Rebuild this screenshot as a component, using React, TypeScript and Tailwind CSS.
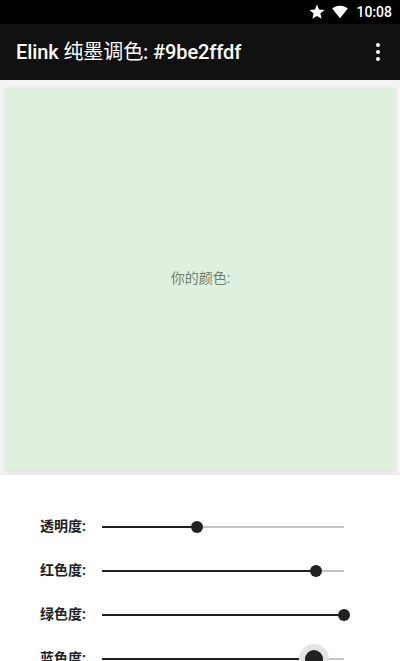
const sliders = [
  { label: '透明度:', percent: 39.3 },
  { label: '红色度:', percent: 88.4 },
  { label: '绿色度:', percent: 100 },
  { label: '蓝色度:', percent: 87.6, active: true },
];

function Slider({ label, percent, active }: { label: string; percent: number; active?: boolean }) {
  return (
    <div className="h-11 flex items-center pl-10 pr-14 shrink-0">
      <span className="w-[62px] shrink-0 text-[14px] font-bold text-[#222] leading-none -mt-[2px]">{label}</span>
      <div className="relative flex-1 h-[2px] bg-[#c4c4c4]">
        <div className="h-full bg-[#1f1f1f]" style={{ width: `${percent}%` }} />
        {active ? (
          <div
            className="absolute top-1/2 -translate-x-1/2 -translate-y-1/2 w-[30px] h-[30px] rounded-full bg-[#e4e4e4] flex items-center justify-center"
            style={{ left: `${percent}%` }}
          >
            <div className="w-[18px] h-[18px] rounded-full bg-[#212121]" />
          </div>
        ) : (
          <div
            className="absolute top-1/2 -translate-x-1/2 -translate-y-1/2 w-3 h-3 rounded-full bg-[#212121]"
            style={{ left: `${percent}%` }}
          />
        )}
      </div>
    </div>
  );
}

export default function App() {
  return (
    <div className="w-[400px] h-[661px] overflow-hidden bg-white flex flex-col font-['Roboto','Noto_Sans_CJK_SC',sans-serif]">
      <div className="h-6 bg-black flex items-center justify-end pr-2 gap-2 shrink-0 text-white">
        <svg width="18" height="18" viewBox="0 0 24 24" fill="currentColor" className="-mr-[2px]">
          <path d="M12 17.27 18.18 21l-1.64-7.03L22 9.24l-7.19-.61L12 2 9.19 8.63 2 9.24l5.46 4.73L5.82 21z" />
        </svg>
        <svg width="16" height="14" viewBox="0 0 18 14" fill="currentColor" className="-mt-[1px]">
          <path d="M9 14 0.2 3.2C1.6 2.2 4.6 0 9 0s7.4 2.2 8.8 3.2z" />
        </svg>
        <span className="text-[14px] font-medium leading-none">10:08</span>
      </div>
      <header className="h-14 bg-[#111111] flex items-center justify-between pl-4 pr-5 shrink-0 z-10">
        <h1 className="text-[20px] font-medium text-white leading-none tracking-[-0.1px]">
          Elink <span className="font-normal">纯墨调色</span>: #9be2ffdf
        </h1>
        <div className="flex flex-col gap-[3px]">
          <span className="w-1 h-1 rounded-full bg-white" />
          <span className="w-1 h-1 rounded-full bg-white" />
          <span className="w-1 h-1 rounded-full bg-white" />
        </div>
      </header>
      <div className="h-[395px] bg-[#f4f4f4] border-b-2 border-[#ededed] pl-[6px] pr-[5px] pt-2 pb-[3px] shrink-0">
        <div className="h-full bg-[#e0f0df] flex items-center justify-center pb-[3px] shadow-[0_1px_4px_rgba(0,0,0,0.12)]">
          <span className="text-[14px] text-[#6f7f6f] leading-none">你的颜色:</span>
        </div>
      </div>
      <div className="pt-[30px] flex flex-col">
        {sliders.map((s) => (
          <Slider key={s.label} {...s} />
        ))}
      </div>
    </div>
  );
}
